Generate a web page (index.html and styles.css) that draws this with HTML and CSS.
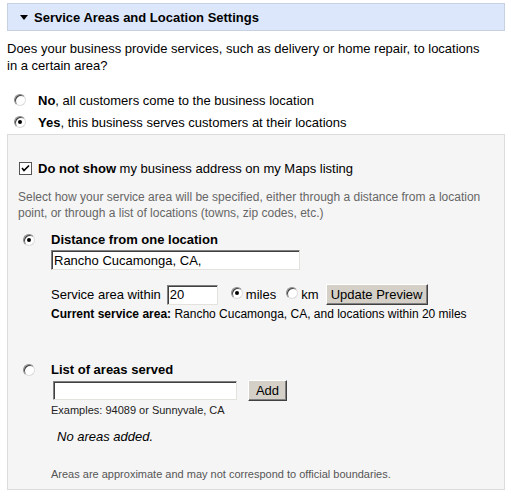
FILE: index.html
```html
<!DOCTYPE html>
<html>
<head>
<meta charset="utf-8">
<link rel="stylesheet" href="styles.css">
</head>
<body>
<div class="wrap">
  <div class="header"><span class="tri"></span><span class="title">Service Areas and Location Settings</span></div>
  <p class="intro">Does your business provide services, such as delivery or home repair, to locations in a certain area?</p>
  <div class="choice"><span class="radio"></span><span><b>No</b>, all customers come to the business location</span></div>
  <div class="choice"><span class="radio on"></span><span><b>Yes</b>, this business serves customers at their locations</span></div>
  <div class="panel">
    <div class="check-row"><span class="checkbox"><svg width="11" height="11" viewBox="0 0 11 11"><path d="M2 5 L4 7.5 L9 2.5" fill="none" stroke="#000" stroke-width="1.6"/></svg></span><span><b>Do not show</b> my business address on my Maps listing</span></div>
    <p class="hint">Select how your service area will be specified, either through a distance from a location point, or through a list of locations (towns, zip codes, etc.)</p>
    <div class="option opt-distance">
      <span class="radio on"></span>
      <div class="opt-body">
        <div class="opt-title">Distance from one location</div>
        <div class="field location">Rancho Cucamonga, CA,</div>
        <div class="within">
          <span>Service area within</span>
          <span class="field num">20</span>
          <span class="radio on small"></span><span>miles</span>
          <span class="radio small km"></span><span>km</span>
          <span class="btn update">Update Preview</span>
        </div>
        <div class="current"><b>Current service area:</b> Rancho Cucamonga, CA, and locations within 20 miles</div>
      </div>
    </div>
    <div class="option opt-list">
      <span class="radio"></span>
      <div class="opt-body">
        <div class="opt-title">List of areas served</div>
        <div class="add-row"><span class="field areas"></span><span class="btn add">Add</span></div>
        <div class="examples">Examples: 94089 or Sunnyvale, CA</div>
        <div class="none">No areas added.</div>
        <div class="note">Areas are approximate and may not correspond to official boundaries.</div>
      </div>
    </div>
  </div>
</div>
</body>
</html>
```
FILE: styles.css
```css
html, body { margin: 0; padding: 0; background: #fff; }
body { font-family: "Liberation Sans", Arial, sans-serif; font-size: 13px; color: #000; }
.wrap { padding: 3px 6px 0 7px; }
.header {
  height: 28px; box-sizing: border-box;
  border: 1px solid #c7d1e2; background: #dce7fb;
  display: flex; align-items: center; padding-left: 12px;
}
.tri { width: 0; height: 0; border-left: 4px solid transparent; border-right: 4px solid transparent; border-top: 5px solid #000; margin-right: 6px; margin-top: 1px; }
.title { font-weight: bold; font-size: 13px; }
.intro { margin: 9px 0 0 0; line-height: 17px; width: 478px; }
.choice { display: flex; align-items: center; height: 22px; }
.intro + .choice { margin-top: 15px; }
.choice .radio { margin: 0 12px 0 7px; }
.radio {
  display: inline-block; width: 12px; height: 12px; box-sizing: border-box; flex: none;
  border-radius: 50%; background: #fff;
  border: 1px solid; border-color: #8a8a8a #dcdcdc #dcdcdc #8a8a8a;
  box-shadow: inset 1px 1px 0 #404040;
  position: relative;
}
.radio.on::after {
  content: ""; position: absolute; left: 3px; top: 3px; width: 4px; height: 4px; border-radius: 50%; background: #000;
}
.panel {
  margin-top: 1px; border: 1px solid #dcdcdc; background: #f5f5f5;
  padding: 25px 10px 8px 10px;
}
.check-row { display: flex; align-items: center; line-height: 17px; }
.checkbox {
  width: 13px; height: 13px; box-sizing: border-box; border: 1px solid #555; background: #fff;
  display: inline-flex; align-items: center; justify-content: center; margin: 0 6px 0 1px; flex: none;
}
.checkbox svg { display: block; }
.hint { margin: 12px 0 0 0; font-size: 12px; line-height: 16px; color: #666; }
.option { display: grid; grid-template-columns: 33px 1fr; }
.option .radio { margin: 3px 0 0 5px; }
.opt-distance { margin-top: 10px; }
.opt-list { margin-top: 39px; }
.opt-title { font-weight: bold; font-size: 13px; line-height: 17px; }
.field {
  display: flex; align-items: center; box-sizing: border-box; background: #fff; font-size: 13px; padding: 0 2px;
  border: 1px solid; border-color: #808080 #e4e2dc #e4e2dc #808080;
  box-shadow: inset 1px 1px 0 #404040;
}
.location { width: 249px; height: 20px; margin-top: 2px; }
.within { display: flex; align-items: center; margin-top: 14px; height: 21px; }
.num { width: 51px; height: 20px; margin: 0 13px 0 6px; }
.radio.small { margin: -3px 3px 0 0; }
.radio.km { margin-left: 10px; }
.btn {
  display: inline-flex; align-items: center; justify-content: center; box-sizing: border-box;
  height: 21px; background: #d4d0c8; font-size: 13px;
  border: 1px solid; border-color: #fff #404040 #404040 #fff;
  box-shadow: inset -1px -1px 0 #808080;
}
.update { width: 102px; margin-left: 7px; }
.current { font-size: 12px; line-height: 15px; margin-top: 2px; }
.add-row { display: flex; align-items: center; margin-top: 2px; }
.areas { width: 184px; height: 19px; margin-left: 2px; }
.add { width: 39px; margin-left: 11px; }
.examples { font-size: 11px; line-height: 14px; margin-top: 2px; color: #222; }
.none { font-style: italic; font-size: 13px; line-height: 16px; margin: 12px 0 0 6px; }
.note { font-size: 11px; line-height: 14px; margin-top: 22px; color: #555; }
```
